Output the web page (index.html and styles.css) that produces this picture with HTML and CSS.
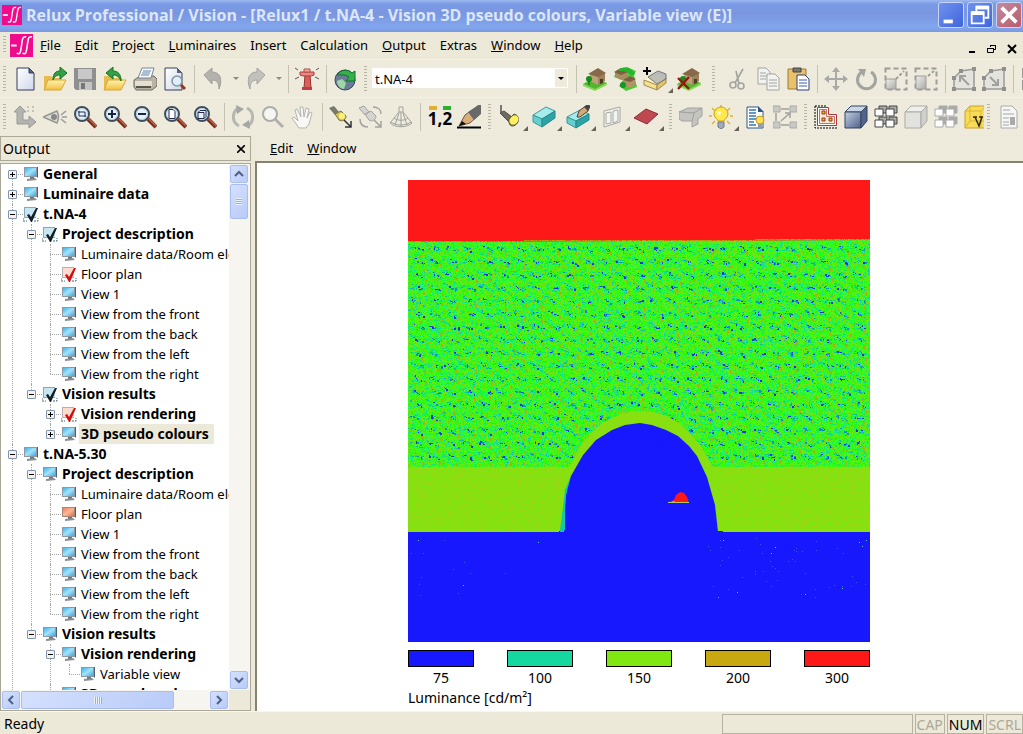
FILE: index.html
```
<!DOCTYPE html>
<html lang="en">
<head>
    <meta charset="UTF-8">
    <meta name="viewport" content="width=device-width, initial-scale=1.0">
    <title>Relux Professional / Vision</title>
    <link rel="stylesheet" href="styles.css">
</head>
<body>
    <!-- shared icons -->
    <svg class="sprite" aria-hidden="true">
        <defs>
            <linearGradient id="gScreen" x1="0" y1="0" x2="1" y2="1"><stop offset="0" stop-color="#3fb4e6"/><stop offset=".5" stop-color="#a5e2fa"/><stop offset="1" stop-color="#38a9e0"/></linearGradient>
            <linearGradient id="gOrange" x1="0" y1="0" x2="1" y2="1"><stop offset="0" stop-color="#f08058"/><stop offset=".5" stop-color="#fbb898"/><stop offset="1" stop-color="#ea6a3c"/></linearGradient>
            <linearGradient id="gPage" x1="0" y1="0" x2="1" y2="1"><stop offset="0" stop-color="#fff"/><stop offset="1" stop-color="#cfd8ea"/></linearGradient>
            <linearGradient id="gFolder" x1="0" y1="0" x2="0" y2="1"><stop offset="0" stop-color="#fff3b0"/><stop offset="1" stop-color="#f0c040"/></linearGradient>
            <linearGradient id="gCube" x1="0" y1="0" x2="1" y2="1"><stop offset="0" stop-color="#c4cfe4"/><stop offset="1" stop-color="#4d5f88"/></linearGradient>
            <linearGradient id="gGray" x1="0" y1="0" x2="1" y2="1"><stop offset="0" stop-color="#f0efea"/><stop offset="1" stop-color="#a9a9a6"/></linearGradient>
            <symbol id="monitor" viewBox="0 0 16 16">
                <path d="M1 1h13v10H1z" fill="#8d9aa5"/><path d="M2 2h11v8H2z" fill="url(#gScreen)"/><path d="M14 1h1v11l-1-1z" fill="#55606a"/><path d="M7 11h4v2H7z" fill="#6c757c"/><path d="M4 13l8-1 2 2-10 1z" fill="#8b8f92"/>
            </symbol>
            <symbol id="monitor-orange" viewBox="0 0 16 16">
                <path d="M1 1h13v10H1z" fill="#a88478"/><path d="M2 2h11v8H2z" fill="url(#gOrange)"/><path d="M14 1h1v11l-1-1z" fill="#6a5750"/><path d="M7 11h4v2H7z" fill="#6c757c"/><path d="M4 13l8-1 2 2-10 1z" fill="#8b8f92"/>
            </symbol>
            <symbol id="check-dark" viewBox="0 0 16 16">
                <path d="M1 1h12v11H1z" fill="#86a8b8"/><path d="M2 2h11v9H2z" fill="#c6e6f4"/><path d="M0 12v3h4M11 15h4v-3" fill="none" stroke="#3c6c80" stroke-dasharray="2 1"/><path d="M4 9l2-1 2 3 5-9h2L9 16H8z" fill="#141e26"/>
            </symbol>
            <symbol id="check-red" viewBox="0 0 16 16">
                <path d="M1 1h12v11H1z" fill="#b8aeb4"/><path d="M2 2h11v9H2z" fill="#fbdccf"/><path d="M0 12v3h4M11 15h4v-3" fill="none" stroke="#3c6c80" stroke-dasharray="2 1"/><path d="M4 9l2-1 2 3 5-9h2L9 16H8z" fill="#d01010"/>
            </symbol>
            <symbol id="logo" viewBox="0 0 24 24">
                <path d="M0 0h24v24H0z" fill="#f00a8c"/><path d="M1 12h6" stroke="#fff" stroke-width="2"/><path d="M7 20c4 2 4-1 5-8s1-10 5-9M13 20c4 2 4-1 5-8s1-10 5-9" fill="none" stroke="#fff" stroke-width="1.6"/>
            </symbol>
            <symbol id="lens" viewBox="0 0 24 24">
                <path d="M15 14l8 8" stroke="#7c2c1c" stroke-width="4"/><path d="M15 13l8 8" stroke="#c0664c" stroke-width="1.4"/><circle cx="9" cy="9" r="7" fill="#e6f2fa" stroke="#3e4e5c" stroke-width="2"/><circle cx="9" cy="9" r="5.5" fill="none" stroke="#b7cbd8"/>
            </symbol>
            <symbol id="house" viewBox="0 0 24 24">
                <path d="M0 17l11-6 13 5-12 7z" fill="#4fb82c"/><path d="M0 17l12 5v2L0 19zM24 16l-12 6v2l12-6z" fill="#8bd85c"/><path d="M7 7l8-5 7 4v8l-7 4-8-4z" fill="#9b8059"/><path d="M7 7l8 3v8l-8-4z" fill="#bca277"/><path d="M5 7l10-6 8 5-8 4z" fill="#85694a"/><path d="M17 12h3v4l-3 1z" fill="#4e3a26"/><circle cx="6" cy="12" r="3" fill="#168c20"/><path d="M6 14v4" stroke="#0b5a12"/>
            </symbol>
            <symbol id="blocks" viewBox="0 0 24 24">
                <g stroke="currentColor" fill="#fff"><path d="M5 1h8v7H5zM15 1h8v7h-8zM5 12h8v7H5zM15 12h8v7h-8z" fill="#aaa"/><path d="M1 4h8v7H1zM12 4h8v7h-8zM1 15h8v7H1zM12 15h8v7h-8z"/></g>
            </symbol>
        </defs>
    </svg>

    <header class="titlebar">
        <svg class="titlebar-logo"><use href="#logo"/></svg>
        <h1>Relux Professional / Vision - [Relux1 / t.NA-4 - Vision 3D pseudo colours, Variable view (E)]</h1>
        <div class="window-buttons">
            <button aria-label="Minimise"><svg viewBox="0 0 26 26"><path d="M5 18h10v4H5z" fill="#fff"/></svg></button>
            <button aria-label="Restore"><svg viewBox="0 0 26 26"><path d="M9 9V4h13v12h-4" fill="none" stroke="#fff" stroke-width="2"/><path d="M9 5h13" stroke="#fff" stroke-width="4"/><path d="M4 10h13v12H4z" fill="none" stroke="#fff" stroke-width="2"/><path d="M4 11h13" stroke="#fff" stroke-width="4"/></svg></button>
            <button class="close" aria-label="Close"><svg viewBox="0 0 26 26"><path d="M5 5l16 16M21 5L5 21" stroke="#fff" stroke-width="4"/></svg></button>
        </div>
    </header>

    <nav class="menubar">
        <span class="grip"></span>
        <svg class="menubar-logo"><use href="#logo"/></svg>
        <button><u>F</u>ile</button>
        <button><u>E</u>dit</button>
        <button><u>P</u>roject</button>
        <button><u>L</u>uminaires</button>
        <button>Insert</button>
        <button>Calculation</button>
        <button><u>O</u>utput</button>
        <button>Extras</button>
        <button><u>W</u>indow</button>
        <button><u>H</u>elp</button>
        <div class="mdi-buttons">
            <button aria-label="Minimise document"><svg viewBox="0 0 10 10"><path d="M2 7h6v2H2z"/></svg></button>
            <button aria-label="Restore document"><svg viewBox="0 0 10 10"><path d="M3.5 3V1.5h5v4H7M3 1.5h6M.5 4.5h6v4h-6zM0 4.5h7" fill="none" stroke="#000"/></svg></button>
            <button aria-label="Close document"><svg viewBox="0 0 10 10"><path d="M1 1l8 8M9 1L1 9" stroke="#000" stroke-width="2"/></svg></button>
        </div>
    </nav>

    <div class="toolbar">
        <span class="grip"></span>
        <button class="tool" aria-label="New"><svg viewBox="0 0 24 24"><path d="M4 1h12l5 5v17H4z" fill="url(#gPage)" stroke="#333f58"/><path d="M16 1v5h5z" fill="#56648a" stroke="#333f58"/></svg></button>
        <button class="tool" aria-label="Open"><svg viewBox="0 0 24 24"><path d="M1 22V9h7l2 2h9v11z" fill="#e8bd50"/><path d="M1 23l4-10h18l-5 10z" fill="url(#gFolder)" stroke="#d9a53a"/><path d="M10 13c0-7 3-9 7-9V0l7 6-7 6V8c-3 0-5 1-7 5z" fill="#33a044" stroke="#187028"/></svg></button>
        <button class="tool" aria-label="Save"><svg viewBox="0 0 24 24"><path d="M1 1h22v22H3l-2-2z" fill="#8f8f8f"/><path d="M5 2h14v10H5z" fill="#c8c8c8"/><path d="M6 15h13v8H6z" fill="#c4c4c4"/><path d="M8 16h4v6H8z" fill="#777"/></svg></button>
        <button class="tool" aria-label="Import"><svg viewBox="0 0 24 24"><path d="M1 22V9h7l2 2h9v11z" fill="#e8bd50"/><path d="M1 23l4-10h18l-5 10z" fill="url(#gFolder)" stroke="#d9a53a"/><path d="M18 14c0-7-3-10-8-10V0L3 6l7 6V8c4 0 6 2 8 6z" fill="#33a044" stroke="#187028"/></svg></button>
        <button class="tool" aria-label="Print"><svg viewBox="0 0 24 24"><path d="M1 13l6-4h14l3 3v7l-5 4H3l-2-3z" fill="#b9b3a4" stroke="#6f6a5e"/><path d="M9 1h12l-3 10H5z" fill="#f5f9ff" stroke="#7b8596"/><path d="M10 4h8M9 6h8M8 8h8" stroke="#5d84a5"/><path d="M2 14h17v5H2z" fill="#e4dfd0"/><path d="M3 20h15" stroke="#555" stroke-width="2"/></svg></button>
        <button class="tool" aria-label="Preview"><svg viewBox="0 0 24 24"><path d="M2 1h12l5 5v17H2z" fill="url(#gPage)" stroke="#333f58"/><path d="M14 1v5h5z" fill="#56648a"/><path d="M18 18l4 4" stroke="#8c3a26" stroke-width="3"/><circle cx="14" cy="14" r="5" fill="#dceffa" stroke="#8494a2" stroke-width="1.5"/></svg></button>
        <span class="sep"></span>
        <button class="tool" aria-label="Undo"><svg viewBox="0 0 24 24"><path d="M3 8l8-7v4c8 0 11 7 7 17 0-6-2-9-7-9v4z" fill="#b4b2ad" stroke="#a09e9a"/></svg></button>
        <button class="drop" aria-label="Undo list"></button>
        <button class="tool" aria-label="Redo"><svg viewBox="0 0 24 24"><path d="M21 8l-8-7v4C5 5 2 12 6 22c0-6 2-9 7-9v4z" fill="#c3c1bc" stroke="#a5a39f"/></svg></button>
        <button class="drop" aria-label="Redo list"></button>
        <span class="sep"></span>
        <button class="tool" aria-label="Calculate"><svg viewBox="0 0 24 24"><path d="M10 8h5l1 13H9z" fill="#d86058" stroke="#973030"/><path d="M7 20h10v3H7z" fill="#b84040"/><path d="M5 5h14v3l-3 1H8L5 8z" fill="#ec8880" stroke="#a53c3c"/><path d="M9 2h6v3H9z" fill="#f4a89c" stroke="#b05048"/><path d="M0 1l3 2M24 1l-3 2M0 12l4-2M24 12l-4-2" stroke="#555"/></svg></button>
        <span class="sep"></span>
        <button class="tool" aria-label="Web"><svg viewBox="0 0 24 24"><circle cx="12" cy="13" r="10" fill="#6a7c98" stroke="#34465f"/><path d="M4 8c4-6 11-6 15-2l3-2v10h-9l3-4c-4-3-9-2-12-2z" fill="#35b04a" stroke="#12722a"/><path d="M4 14l5-2 4 4-2 6c-4 0-7-4-7-8z" fill="#9fd8a6"/></svg></button>
        <span class="grip"></span>
        <label class="combo">
            <select aria-label="Scene"><option>t.NA-4</option></select>
        </label>
        <span class="sep"></span>
        <button class="tool" aria-label="Exterior scene"><svg><use href="#house"/></svg></button>
        <button class="tool" aria-label="Several scenes"><svg viewBox="0 0 24 24"><path d="M4 3l10-3 9 4-2 4 3 12-11 4-7-5 4-6-9-3z" fill="#51c834"/><path d="M2 5l6-3 6 3v6l-6 2-6-3z" fill="#a88c62"/><path d="M11 13l6-4 5 3v6l-5 3-6-3z" fill="#b09468"/><path d="M1 5l7-4 7 4-7 3zM10 13l7-4 6 3-6 3z" fill="#7a5f42"/><path d="M6 2c5-3 13-2 16 5l-4 2c-2-4-6-5-12-5z" fill="#21b82c"/><circle cx="10" cy="18" r="3" fill="#199428"/></svg></button>
        <button class="tool has-menu" aria-label="Add room"><svg viewBox="0 0 24 24"><path d="M1 13l9-5 13 3-9 7z" fill="#fff6c4"/><path d="M1 13l13 5v5L1 18z" fill="#f6e08c" stroke="#9c8a5a"/><path d="M14 18l9-7v5l-9 7z" fill="#e4c464" stroke="#9c8a5a"/><path d="M5 10l10-6 8 3v5l-9 5z" fill="#a3a7ae" fill-opacity=".7" stroke="#777"/><path d="M0 4h8M4 0v8" stroke="#000" stroke-width="2"/></svg></button>
        <button class="tool" aria-label="Delete scene"><svg viewBox="0 0 24 24"><use href="#house"/><path d="M1 11l11 11M12 10L1 22" stroke="#a01010" stroke-width="2.4"/></svg></button>
        <span class="grip spaced"></span>
        <button class="tool" aria-label="Cut"><svg viewBox="0 0 24 24" fill="none" stroke="#a3a3a0" stroke-width="1.6"><path d="M17 2L9 16M10 4l3 13"/><circle cx="7" cy="18" r="3"/><circle cx="15" cy="19" r="3"/></svg></button>
        <button class="tool" aria-label="Copy"><svg viewBox="0 0 24 24" fill="#f3f3f1" stroke="#a3a3a0"><path d="M2 1h8l4 4v12H2z"/><path d="M4 6h6M4 9h8M4 12h6"/><path d="M11 7h8l4 4v12H11z"/><path d="M13 13h8M13 16h8M13 19h8"/></svg></button>
        <button class="tool" aria-label="Paste"><svg viewBox="0 0 24 24"><path d="M2 2h18v20H2z" fill="#e9c168" stroke="#9c7a38"/><path d="M7 1h8v4H7z" fill="#777" stroke="#444"/><path d="M11 8h8l4 4v11H11z" fill="#fff" stroke="#2e4372"/><path d="M13 13h8M13 16h8M13 19h8" stroke="#3a5fa4"/></svg></button>
        <span class="sep"></span>
        <button class="tool" aria-label="Move"><svg viewBox="0 0 24 24"><path d="M11 5v6H5V8l-5 4 5 4v-3h6v6H8l4 5 4-5h-3v-6h6v3l5-4-5-4v3h-6V5h3l-4-5-4 5z" fill="#a9a9a6"/></svg></button>
        <button class="tool" aria-label="Rotate"><svg viewBox="0 0 24 24"><path d="M8 5a9 9 0 1 0 9 0" fill="none" stroke="#a3a3a0" stroke-width="3"/><path d="M4 2l8 0-2 8z" fill="#a3a3a0"/></svg></button>
        <button class="tool" aria-label="Scale"><svg viewBox="0 0 24 24"><path d="M1.500 1.500h21v21h-21z" fill="none" stroke="#9c9c99" stroke-width="2" stroke-dasharray="5 3"/><path d="M2 12h10v10H2z" fill="url(#gGray)" stroke="#9c9c99"/><path d="M12 12l8-8" stroke="#9c9c99" stroke-dasharray="3 2" stroke-width="2"/></svg></button>
        <button class="tool" aria-label="Resize"><svg viewBox="0 0 24 24"><path d="M1.500 1.500h21v21h-21z" fill="none" stroke="#9c9c99" stroke-width="2" stroke-dasharray="5 3"/><path d="M2 9h10v13H2z" fill="url(#gGray)" stroke="#9c9c99"/><path d="M14 9l6-5" stroke="#9c9c99" stroke-dasharray="3 2" stroke-width="2"/></svg></button>
        <span class="sep"></span>
        <button class="tool" aria-label="Insert point"><svg viewBox="0 0 24 24"><path d="M2 22V11l7-7 13-2v20z" fill="#e4e3dd" stroke="#9a9a97" stroke-width="1.500"/><path d="M0 20h4v4H0zM20 20h4v4h-4zM20 0h4v4h-4zM7 2h4v4H7zM0 9h4v4H0z" fill="#8f8f8c"/><path d="M9 10l8 8M8 15V9h6" fill="none" stroke="#a0a09d" stroke-width="2"/></svg></button>
        <button class="tool" aria-label="Remove point"><svg viewBox="0 0 24 24"><path d="M2 22V11l7-7 13-2v20z" fill="#e4e3dd" stroke="#9a9a97" stroke-width="1.500"/><path d="M0 20h4v4H0zM20 20h4v4h-4zM20 0h4v4h-4zM7 2h4v4H7zM0 9h4v4H0z" fill="#8f8f8c"/><path d="M8 10l8 8M10 18h6v-6" fill="none" stroke="#a0a09d" stroke-width="2"/></svg></button>
        <span class="sep"></span>
        <button class="tool" aria-label="Align"><svg viewBox="0 0 24 24"><path d="M3 2h18v8H3zM3 14h18v8H3z" fill="#ddd" stroke="#999" stroke-width="2"/></svg></button>
    </div>

    <div class="toolbar">
        <span class="grip"></span>
        <button class="tool" aria-label="Directions"><svg viewBox="0 0 24 24"><path d="M7 1l6 6h-3v8h6v-4l7 6-7 6v-4H4V7H1z" fill="#b3b3b0" stroke="#999"/><path d="M14 2h10M14 6h10" stroke="#999" stroke-dasharray="2 3"/></svg></button>
        <button class="tool" aria-label="View point"><svg viewBox="0 0 24 24"><path d="M0 12l14-6c2 4 2 8 0 12z" fill="#dcdcd8" stroke="#949491" stroke-width="1.5"/><circle cx="11" cy="12" r="3" fill="#888"/><path d="M23 6l-5 4M24 12h-5M23 18l-5-4" stroke="#999" stroke-width="1.5"/></svg></button>
        <button class="tool" aria-label="Zoom window"><svg viewBox="0 0 24 24"><use href="#lens"/><path d="M5 7h7v5M6 6v5h7" fill="none" stroke="#222a50"/></svg></button>
        <button class="tool" aria-label="Zoom in"><svg viewBox="0 0 24 24"><use href="#lens"/><path d="M5 9h8M9 5v8" stroke="#18244c" stroke-width="2"/></svg></button>
        <button class="tool" aria-label="Zoom out"><svg viewBox="0 0 24 24"><use href="#lens"/><path d="M5 9h8" stroke="#18244c" stroke-width="2"/></svg></button>
        <button class="tool" aria-label="Zoom page"><svg viewBox="0 0 24 24"><use href="#lens"/><path d="M6 4.500h4l2 2v7H6z" fill="#fff" stroke="#222a50"/></svg></button>
        <button class="tool" aria-label="Zoom object"><svg viewBox="0 0 24 24"><use href="#lens"/><path d="M5 7.500h6v6H5zM5 7.500l2-2h6v6l-2 2" fill="none" stroke="#222a50"/></svg></button>
        <span class="sep"></span>
        <button class="tool" aria-label="Orbit"><svg viewBox="0 0 24 24"><path d="M8 21C0 17 1 6 8 3M16 3c8 4 7 15 0 18" fill="none" stroke="#b6b6b2" stroke-width="3"/><path d="M5 0l8 4-7 5zM19 24l-8-4 7-5z" fill="#a6a6a2"/></svg></button>
        <button class="tool" aria-label="Zoom"><svg viewBox="0 0 24 24"><path d="M14 14l8 8" stroke="#b0b0ac" stroke-width="3"/><circle cx="9" cy="9" r="7" fill="#f5f5f2" stroke="#acaca8" stroke-width="2"/></svg></button>
        <button class="tool" aria-label="Pan"><svg viewBox="0 0 24 24"><path d="M8 23l-7-10 2-1 4 4L4 5l2-1 4 8-1-10h3l1 10 2-9 3 1-2 9 3-6 2 1-3 11-3 4z" fill="#f8f8f5" stroke="#b4b4b0"/></svg></button>
        <span class="sep"></span>
        <button class="tool" aria-label="Lamp direction"><svg viewBox="0 0 24 24"><path d="M0 3l5-2 5 6-4 3z" fill="#77786e"/><path d="M6 9l6-3 5 5c0 4-4 6-7 4z" fill="#d6c552" stroke="#77733c"/><circle cx="13" cy="11" r="3" fill="#fff27a"/><path d="M15 15l7 7M22 16v6h-6" fill="none" stroke="#333" stroke-width="1.5"/></svg></button>
        <button class="tool" aria-label="Lamp rotation"><svg viewBox="0 0 24 24" fill="#d4d4d0" stroke="#a2a29f"><path d="M0 3l5-2 5 6-4 3zM6 9l6-3 5 5c0 4-4 6-7 4z"/><path d="M14 2c5 0 8 3 8 7M1 14c0 5 3 8 8 8M15 15l7 7M22 16v6h-6" fill="none" stroke-width="1.5"/></svg></button>
        <button class="tool" aria-label="Photometric solid"><svg viewBox="0 0 24 24" fill="none" stroke="#a2a29f"><path d="M10 2h4v5h-4zM10 7L1 18c5 5 17 5 22 0L14 7M12 7v15M10 8L6 20M14 8l4 12M5 13c4 3 10 3 14 0M2 17c5 4 15 4 20 0"/></svg></button>
        <span class="sep"></span>
        <button class="tool numbers" aria-label="Values"><span class="numbers-marks"></span><b>1,2</b></button>
        <button class="tool" aria-label="Draw"><svg viewBox="0 0 24 24"><path d="M2 21L8 10l14-10h2v8L13 18z" fill="#d9ad7c" stroke="#6d5848"/><path d="M11 7L22 0h2v9l-7 6z" fill="#696969"/><path d="M2 21l3-5 4 3z" fill="#111"/><path d="M0 22.500h24" stroke="#000" stroke-width="2"/></svg></button>
        <span class="grip"></span>
        <button class="tool has-menu" aria-label="Luminaire"><svg viewBox="0 0 24 24"><path d="M3 0v7" fill="none" stroke="#777" stroke-width="2"/><path d="M2 8l4-2 8 6-3 5z" fill="#6c6c60" stroke="#4c4c44"/><path d="M10 15l6-6c4 1 5 4 4 8-2 4-6 5-8 3z" fill="#8e8a52" stroke="#5c5a38"/><ellipse cx="16" cy="15" rx="4" ry="5" transform="rotate(40 16 15)" fill="#fff060"/></svg></button>
        <button class="tool has-menu" aria-label="Block"><svg viewBox="0 0 24 24"><path d="M1 10L14 2l9 4-13 8z" fill="#a6ecec" stroke="#3f9898"/><path d="M1 10l9 4v8l-9-5z" fill="#62cfd0" stroke="#3f9898"/><path d="M10 14l13-8v7l-13 9z" fill="#2ba4a6" stroke="#2c8486"/></svg></button>
        <button class="tool has-menu" aria-label="Edit block"><svg viewBox="0 0 24 24"><path d="M1 12L14 5l9 4-13 7z" fill="#a6ecec" stroke="#3f9898"/><path d="M1 12l9 4v7l-9-5z" fill="#62cfd0" stroke="#3f9898"/><path d="M10 16l13-7v6l-13 8z" fill="#2ba4a6" stroke="#2c8486"/><path d="M11 12l2-6 8-6 3 1-2 5-8 6z" fill="#d6a777" stroke="#4e4035"/><path d="M18 2l3-2 3 1-2 5z" fill="#444"/></svg></button>
        <button class="tool has-menu" aria-label="Window element"><svg viewBox="0 0 24 24" fill="#f4f4f0" stroke="#a6a6a2"><path d="M4 6l16-4v15L4 22z"/><path d="M6 8l5-1v11l-5 1zM13 6l5-1v11l-5 2z"/></svg></button>
        <button class="tool has-menu" aria-label="Surface"><svg viewBox="0 0 24 24"><path d="M0 13L12 4l12 5-11 10z" fill="#c04850" stroke="#8c2c38"/></svg></button>
        <span class="grip"></span>
        <button class="tool" aria-label="Camera"><svg viewBox="0 0 24 24" fill="#c4c4c0" stroke="#a2a29f"><path d="M0 7l9-4h14l-8 5z"/><path d="M0 7l15 1v8H3l-3-2z"/><path d="M15 8l8-5v8l-4 3v5l-6 3v-5z"/></svg></button>
        <button class="tool has-menu" aria-label="Light"><svg viewBox="0 0 24 24"><path d="M12 0v3M3 3l3 3M21 3l-3 3M0 11h3M24 11h-3M3 19l3-3M21 19l-3-3" stroke="#e8b41c" stroke-width="1.500"/><path d="M9 16c0-2-4-3-4-7a7 7 0 0 1 14 0c0 4-4 5-4 7z" fill="#ffe94c" stroke="#c8a018"/><path d="M9 17h6v5l-3 2-3-2z" fill="#a3abb8" stroke="#727a88"/><circle cx="10" cy="8" r="2" fill="#fffbd0"/></svg></button>
        <button class="tool" aria-label="Light list"><svg viewBox="0 0 24 24"><path d="M4 2h11l5 5v16H4z" fill="#fff" stroke="#2b568c"/><path d="M6 5h7M6 8h7M6 11h7M6 14h7M6 17h5M6 20h7" stroke="#2f78b8" stroke-width="1.500"/><path d="M15 1l6 6h-6z" fill="#2b568c"/><circle cx="17" cy="15" r="4" fill="#ffdf54" stroke="#c69a20"/><path d="M15 19h4v4h-4z" fill="#999"/></svg></button>
        <button class="tool" aria-label="Groups"><svg viewBox="0 0 24 24"><path d="M0 1h7v6H0zM17 1h7v6h-7zM0 17h7v6H0zM17 17h7v6h-7z" fill="#c9c9c5" stroke="#a9a9a5"/><path d="M3 8v8M8 4h8M8 16l9-8M12 8h5v5M8 20h8" fill="none" stroke="#a0a09d" stroke-width="1.500"/></svg></button>
        <span class="grip"></span>
        <button class="tool" aria-label="Floor plan"><svg viewBox="0 0 24 24"><path d="M1 1h12M1 1v22h22" fill="none" stroke="#000" stroke-dasharray="2 1"/><path d="M3.500 2.500h11v7h8v11h-19z" fill="#fff" stroke="#b03838"/><path d="M5.500 4.500h7v7h8v7h-15z" fill="#fbe8d8" stroke="#c87060"/><path d="M8 6h3v3H8zM8 13h3v3H8zM15 13h3v3h-3z" fill="#f8b424" stroke="#8b3820"/></svg></button>
        <button class="tool" aria-label="3D view"><svg viewBox="0 0 24 24" stroke="#35435f"><path d="M1 7l6-6h16l-6 6z" fill="#cbd6e8"/><path d="M1 7h16v16H1z" fill="url(#gCube)"/><path d="M17 7l6-6v15l-6 7z" fill="#52648c"/></svg></button>
        <button class="tool dark" aria-label="3D arrangement"><svg><use href="#blocks"/></svg></button>
        <button class="tool" aria-label="3D view off"><svg viewBox="0 0 24 24" stroke="#aaaaa6"><path d="M1 7l6-6h16l-6 6z" fill="#efefeb"/><path d="M1 7h16v16H1z" fill="#e2e2de"/><path d="M17 7l6-6v15l-6 7z" fill="#cfcfcb"/></svg></button>
        <button class="tool pale" aria-label="3D arrangement off"><svg><use href="#blocks"/></svg></button>
        <button class="tool narrow" aria-label="Vision"><svg viewBox="0 0 24 24"><path d="M1 6l5-5h18v22H1z" fill="#f8dc58" stroke="#c9a220"/><path d="M1 6h16v17M17 6l5-5M6 1v15l-5 7M6 16h17" fill="none" stroke="#d9b534"/><path d="M9 12h4M15 12h4M11 12l4 9 3-9" fill="none" stroke="#2a2818" stroke-width="1.500"/></svg></button>
        <span class="grip"></span>
        <button class="tool" aria-label="Report"><svg viewBox="0 0 24 24"><path d="M4 1h11l5 5v17H4z" fill="#f7f7f5" stroke="#aaa"/><path d="M6 5h7M6 9h11M6 13h6M6 17h6M6 20h6" stroke="#a4a4a4"/><path d="M13 12h5v8h-5z" fill="#aaa"/></svg></button>
    </div>

    <main class="workspace">
        <aside class="output">
            <div class="output-head">
                <h2>Output</h2>
                <button aria-label="Close output"><svg viewBox="0 0 8 8"><path d="M0 0l8 8M8 0L0 8" stroke="#000" stroke-width="1.600"/></svg></button>
            </div>
            <div class="tree-frame">
                <div class="tree-view">
                    <ul class="tree">
                        <li><div class="node group"><button class="toggle plus" aria-label="Expand"></button><svg><use href="#monitor"/></svg><span>General</span></div></li>
                        <li><div class="node group"><button class="toggle plus" aria-label="Expand"></button><svg><use href="#monitor"/></svg><span>Luminaire data</span></div></li>
                        <li><div class="node group"><button class="toggle" aria-label="Collapse"></button><svg><use href="#check-dark"/></svg><span>t.NA-4</span></div>
                            <ul>
                                <li><div class="node group"><button class="toggle" aria-label="Collapse"></button><svg><use href="#check-dark"/></svg><span>Project description</span></div>
                                    <ul>
                                        <li><div class="node"><svg><use href="#monitor"/></svg><span>Luminaire data/Room elements</span></div></li>
                                        <li><div class="node"><svg><use href="#check-red"/></svg><span>Floor plan</span></div></li>
                                        <li><div class="node"><svg><use href="#monitor"/></svg><span>View 1</span></div></li>
                                        <li><div class="node"><svg><use href="#monitor"/></svg><span>View from the front</span></div></li>
                                        <li><div class="node"><svg><use href="#monitor"/></svg><span>View from the back</span></div></li>
                                        <li><div class="node"><svg><use href="#monitor"/></svg><span>View from the left</span></div></li>
                                        <li><div class="node"><svg><use href="#monitor"/></svg><span>View from the right</span></div></li>
                                    </ul>
                                </li>
                                <li><div class="node group"><button class="toggle" aria-label="Collapse"></button><svg><use href="#check-dark"/></svg><span>Vision results</span></div>
                                    <ul>
                                        <li><div class="node group"><button class="toggle plus" aria-label="Expand"></button><svg><use href="#check-red"/></svg><span>Vision rendering</span></div></li>
                                        <li><div class="node group selected"><button class="toggle plus" aria-label="Expand"></button><svg><use href="#monitor"/></svg><span>3D pseudo colours</span></div></li>
                                    </ul>
                                </li>
                            </ul>
                        </li>
                        <li><div class="node group"><button class="toggle" aria-label="Collapse"></button><svg><use href="#monitor"/></svg><span>t.NA-5.30</span></div>
                            <ul>
                                <li><div class="node group"><button class="toggle" aria-label="Collapse"></button><svg><use href="#monitor"/></svg><span>Project description</span></div>
                                    <ul>
                                        <li><div class="node"><svg><use href="#monitor"/></svg><span>Luminaire data/Room elements</span></div></li>
                                        <li><div class="node"><svg><use href="#monitor-orange"/></svg><span>Floor plan</span></div></li>
                                        <li><div class="node"><svg><use href="#monitor"/></svg><span>View 1</span></div></li>
                                        <li><div class="node"><svg><use href="#monitor"/></svg><span>View from the front</span></div></li>
                                        <li><div class="node"><svg><use href="#monitor"/></svg><span>View from the back</span></div></li>
                                        <li><div class="node"><svg><use href="#monitor"/></svg><span>View from the left</span></div></li>
                                        <li><div class="node"><svg><use href="#monitor"/></svg><span>View from the right</span></div></li>
                                    </ul>
                                </li>
                                <li><div class="node group"><button class="toggle" aria-label="Collapse"></button><svg><use href="#monitor"/></svg><span>Vision results</span></div>
                                    <ul>
                                        <li><div class="node group"><button class="toggle" aria-label="Collapse"></button><svg><use href="#monitor"/></svg><span>Vision rendering</span></div>
                                            <ul>
                                                <li><div class="node"><svg><use href="#monitor"/></svg><span>Variable view</span></div></li>
                                            </ul>
                                        </li>
                                        <li><div class="node group"><svg><use href="#monitor"/></svg><span>3D pseudo colours</span></div></li>
                                    </ul>
                                </li>
                            </ul>
                        </li>
                    </ul>
                </div>
                <div class="scroll vertical">
                    <button aria-label="Scroll up"><svg viewBox="0 0 10 10"><path d="M1 7l4-4 4 4"/></svg></button>
                    <div class="thumb"></div>
                    <button class="end" aria-label="Scroll down"><svg viewBox="0 0 10 10"><path d="M1 3l4 4 4-4"/></svg></button>
                </div>
                <div class="scroll horizontal">
                    <button aria-label="Scroll left"><svg viewBox="0 0 10 10"><path d="M7 1L3 5l4 4"/></svg></button>
                    <div class="thumb"></div>
                    <button class="end" aria-label="Scroll right"><svg viewBox="0 0 10 10"><path d="M3 1l4 4-4 4"/></svg></button>
                </div>
            </div>
        </aside>

        <section class="document">
            <nav class="document-menu">
                <button><u>E</u>dit</button>
                <button><u>W</u>indow</button>
            </nav>
            <div class="view">
                <figure class="result">
                    <canvas id="render" width="462" height="462"></canvas>
                    <ul class="legend">
                        <li><i class="swatch blue"></i>75</li>
                        <li><i class="swatch teal"></i>100</li>
                        <li><i class="swatch green"></i>150</li>
                        <li><i class="swatch ochre"></i>200</li>
                        <li><i class="swatch red"></i>300</li>
                    </ul>
                    <figcaption>Luminance [cd/m²]</figcaption>
                </figure>
            </div>
        </section>
    </main>

    <footer class="statusbar">
        <span class="status-text">Ready</span>
        <span class="cell wide"></span>
        <span class="cell off">CAP</span>
        <span class="cell">NUM</span>
        <span class="cell off">SCRL</span>
    </footer>

    <script src="script.js"></script>
</body>
</html>
```
FILE: styles.css
```
* {
    box-sizing: border-box;
}
body {
    margin: 0;
    height: 100vh;
    display: flex;
    flex-direction: column;
    overflow: hidden;
    background: #ece9d8;
    color: #000;
    font: 14px/20px "Noto Sans", "Open Sans", sans-serif;
}
button {
    padding: 0;
    border: none;
    background: none;
    color: inherit;
    font: inherit;
}
ul {
    margin: 0;
    padding: 0;
    list-style: none;
}
h1, h2, figure {
    margin: 0;
}
.sprite {
    position: absolute;
    width: 0;
    height: 0;
}

/* title bar */
.titlebar {
    flex: none;
    display: flex;
    align-items: center;
    height: 32px;
    padding: 0 1px 2px 2px;
    background: linear-gradient(#9db9ee 0, #7b9ae6 4px, #7a96df 14px, #82a6ee 27px, #7a98e0 32px);
    color: #dbe6fa;
}
.titlebar-logo {
    width: 20px;
    height: 20px;
    margin-right: 4px;
}
.titlebar h1 {
    flex: 1;
    min-width: 0;
    overflow: hidden;
    white-space: nowrap;
    font: bold 16px/20px "Open Sans", sans-serif;
}
.window-buttons {
    display: flex;
    gap: 3px;
}
.window-buttons button {
    width: 26px;
    height: 26px;
    border: 1px solid #c6d5f8;
    border-radius: 3px;
    background: linear-gradient(135deg, #6f92ee, #3f66dc);
}
.window-buttons .close {
    background: linear-gradient(135deg, #c48aa0, #b85c6c);
}
.window-buttons svg {
    display: block;
    width: 24px;
    height: 24px;
}

/* menu and toolbars */
.menubar {
    flex: none;
    display: flex;
    align-items: center;
    height: 27px;
    padding: 0 6px 1px 0;
    font-size: 13px;
}
.menubar > button {
    margin: 0 7px;
}
.menubar-logo {
    width: 23px;
    height: 23px;
}
.mdi-buttons {
    display: flex;
    gap: 10px;
    margin-left: auto;
    padding-top: 7px;
}
.mdi-buttons svg {
    display: block;
    width: 10px;
    height: 10px;
}
.toolbar {
    flex: none;
    display: flex;
    align-items: center;
    height: 38px;
    overflow: hidden;
    border-top: 1px solid #f4f2e8;
    background: #eeebdd;
}
.grip {
    flex: none;
    width: 11px;
    height: 26px;
    background: repeating-linear-gradient(#b8b5a5 0 1px, transparent 1px 3px) 3px 0 / 3px 100% no-repeat;
}
.menubar .grip {
    width: 10px;
    height: 18px;
}
.grip.spaced {
    margin: 0 4px;
}
.sep {
    flex: none;
    width: 8px;
    height: 28px;
    background: linear-gradient(#c5c2b2, #c5c2b2) 3px 0 / 1px 100% no-repeat;
}
.tool {
    flex: none;
    position: relative;
    width: 30px;
    height: 30px;
}
.tool svg {
    display: block;
    width: 24px;
    height: 24px;
    margin: 0 2px;
}
.tool.has-menu {
    width: 34px;
}
.tool.has-menu::after {
    content: "";
    position: absolute;
    right: 2px;
    bottom: 1px;
    border-bottom: 5px solid #666458;
    border-left: 5px solid transparent;
}
.tool.narrow {
    width: 22px;
    overflow: hidden;
}
.tool.dark {
    color: #444;
}
.tool.pale {
    color: #aaa;
}
.numbers {
    display: flex;
    flex-direction: column;
    align-items: center;
    justify-content: center;
}
.numbers-marks {
    width: 22px;
    height: 4px;
    background: linear-gradient(90deg, #e0b030 8px, transparent 8px 14px, #2fb030 14px);
}
.numbers b {
    font: bold 17px/18px "Open Sans", sans-serif;
}
.drop {
    flex: none;
    width: 13px;
    height: 30px;
}
.drop::before {
    content: "";
    display: block;
    margin: 0 auto;
    width: 0;
    border-top: 3px solid #8c8a80;
    border-left: 3px solid transparent;
    border-right: 3px solid transparent;
}
.combo {
    flex: none;
    width: 196px;
    height: 22px;
    margin-right: 5px;
    position: relative;
}
.combo select {
    display: block;
    width: 100%;
    height: 20px;
    padding: 0 2px;
    border: 1px solid #fff;
    appearance: none;
    background: linear-gradient(#eeebdd, #eeebdd) right / 12px 100% no-repeat #fff;
    color: #000;
    font: inherit;
    font-size: 13px;
}
.combo::after {
    content: "";
    position: absolute;
    right: 4px;
    top: 9px;
    border-top: 3px solid #000;
    border-left: 3px solid transparent;
    border-right: 3px solid transparent;
}

/* output pane */
.workspace {
    flex: 1;
    min-height: 0;
    display: flex;
    gap: 4px;
    padding-top: 1px;
}
.output {
    flex: none;
    width: 251px;
    display: flex;
    flex-direction: column;
}
.output-head {
    flex: none;
    display: flex;
    align-items: center;
    justify-content: space-between;
    height: 25px;
    margin-bottom: 2px;
    padding: 0 5px 0 2px;
    border: 1px solid #aca899;
}
.output-head h2 {
    font: inherit;
}
.output-head svg {
    display: block;
    width: 8px;
    height: 8px;
}
.tree-frame {
    flex: 1;
    min-height: 0;
    display: grid;
    grid-template-columns: 1fr 21px;
    grid-template-rows: 1fr 20px;
    border: 1px solid #aca899;
}
.tree-view {
    overflow: hidden;
    background: #fff;
    font-size: 13px;
}
.tree {
    width: 400px;
    padding-left: 2px;
}
.tree ul {
    padding-left: 19px;
}
.tree li {
    position: relative;
}
/* dotted guide lines */
.tree li::before {
    content: "";
    position: absolute;
    left: 9px;
    top: 0;
    bottom: 0;
    border-left: 1px dotted #a5a5a5;
}
.tree > li:first-child::before {
    top: 10px;
}
.tree ul li:last-child::before {
    bottom: auto;
    height: 10px;
}
.node {
    position: relative;
    display: flex;
    align-items: center;
    height: 20px;
    padding-left: 20px;
    white-space: nowrap;
}
.node::before {
    content: "";
    position: absolute;
    left: 9px;
    width: 11px;
    border-top: 1px dotted #a5a5a5;
}
.node svg {
    flex: none;
    width: 16px;
    height: 16px;
    margin-right: 2px;
}
.node span {
    padding: 0 5px 0 2px;
}
.group {
    font-size: 14px;
    font-weight: bold;
}
.selected span {
    background: #ece9d8;
}
.toggle {
    position: absolute;
    left: 5px;
    width: 9px;
    height: 9px;
    border: 1px solid #8496ae;
    border-radius: 1px;
    background: linear-gradient(#000, #000) center / 5px 1px no-repeat #f4f2ea;
}
.toggle.plus {
    background: linear-gradient(#000, #000) center / 5px 1px no-repeat, linear-gradient(#000, #000) center / 1px 5px no-repeat #f4f2ea;
}
.scroll {
    display: flex;
    gap: 1px;
    padding: 1px;
    background: #f6f5f0;
}
.scroll.vertical {
    flex-direction: column;
}
.scroll button,
.thumb {
    flex: none;
    width: 18px;
    height: 18px;
    border: 1px solid #a9bdf0;
    border-radius: 2px;
    background: linear-gradient(135deg, #d5e0fd, #b8cbf8);
}
.scroll .end {
    margin-top: auto;
}
.horizontal .end {
    margin-top: 0;
    margin-left: auto;
}
.scroll svg {
    display: block;
    width: 10px;
    height: 10px;
    margin: 3px;
    fill: none;
    stroke: #4d6185;
    stroke-width: 2;
}
.thumb {
    display: flex;
    align-items: center;
    justify-content: center;
}
.thumb::before {
    content: "";
    width: 6px;
    height: 7px;
    background: repeating-linear-gradient(#eef4fe 0 1px, #8cb0f8 1px 2px);
}
.vertical .thumb {
    height: 35px;
}
.horizontal .thumb {
    width: 153px;
}
.horizontal .thumb::before {
    width: 8px;
    background: repeating-linear-gradient(90deg, #eef4fe 0 1px, #8cb0f8 1px 2px);
}

/* document */
.document {
    flex: 1;
    min-width: 0;
    display: flex;
    flex-direction: column;
}
.document-menu {
    flex: none;
    display: flex;
    gap: 14px;
    height: 25px;
    padding: 2px 15px 3px;
    background: #eeebdd;
    font-size: 13px;
}
.view {
    flex: 1;
    min-height: 0;
    display: flex;
    justify-content: center;
    padding: 17px 2px 0 0;
    border-top: 2px solid #85836f;
    border-left: 2px solid #85836f;
    background: #fff;
}
.result {
    width: 462px;
}
.result canvas {
    display: block;
}
.legend {
    display: flex;
    justify-content: space-between;
    padding-top: 8px;
    text-align: center;
}
.swatch {
    display: block;
    width: 66px;
    height: 17px;
    margin-bottom: 1px;
    border: 1px solid #000;
}
.blue {
    background: #1818ff;
}
.teal {
    background: #14d8a0;
}
.green {
    background: #7ee810;
}
.ochre {
    background: #c8a810;
}
.red {
    background: #ff1818;
}

/* status bar */
.statusbar {
    flex: none;
    display: flex;
    gap: 2px;
    height: 23px;
    padding-top: 2px;
    border-top: 1px solid #f8f7f0;
}
.status-text {
    flex: 1;
    padding-left: 4px;
}
.cell {
    height: 20px;
    padding: 0 1px;
    border: 1px solid #b5b2a2;
}
.cell.wide {
    width: 191px;
}
.cell.off {
    color: #aca899;
}
```
FILE: script.js
```
const canvas = document.getElementById("render");
const ctx = canvas.getContext("2d");

// fixed seed so the grain is the same on every load
let seed = 7;
function rnd() {
    seed = (seed * 16807) % 2147483647;
    return seed / 2147483647;
}

function dot(x, y, color, w = 1, h = 1) {
    ctx.fillStyle = color;
    ctx.fillRect(Math.round(x), Math.round(y), w, h);
}

function polygon(points, color) {
    ctx.fillStyle = color;
    ctx.beginPath();
    points.forEach(([x, y]) => ctx.lineTo(x, y));
    ctx.fill();
}

// stone wall
const greens = ["#24ff14", "#2cfa18", "#3cfc10", "#4cf412", "#18f440", "#5cf010", "#6ee810", "#14e868", "#7ce014", "#40f01c"];
for (let y = 60; y < 288; y++) {
    for (let x = 0; x < 462; x++) {
        dot(x, y, greens[Math.floor(rnd() * greens.length)]);
    }
}
for (let i = 0; i < 5200; i++) {
    dot(rnd() * 462, 62 + rnd() * 225, rnd() < 0.65 ? "#14dc80" : "#88d418", 1 + Math.floor(rnd() * 2), 1);
}
for (let y = 66; y < 284; y += 13) {
    for (let x = 2; x < 462; x += 17) {
        for (let i = 0; i < 16; i++) {
            const dx = rnd() * 15 - 2;
            dot(x + dx, y + dx * 0.4 + rnd() * 6 - 3, rnd() < 0.35 ? "#12b8a8" : "#14dc88", 1 + Math.floor(rnd() * 2), 1);
        }
        const shift = rnd() * 5;
        for (let i = 0; i < 5; i++) {
            const dx = rnd() * 10;
            dot(x + shift + dx, y + dx * 0.4 + rnd() * 3 - 1, rnd() < 0.5 ? "#1438d8" : "#1090c8", 1 + Math.floor(rnd() * 2), 1 + Math.floor(rnd() * 1.4));
        }
        if (rnd() < 0.6) dot(x + 10 + rnd() * 5, y + 5 + rnd() * 5, "#a8b018", 2, 3);
    }
}

// ceiling
polygon([[0, 0], [462, 0], [462, 60], [0, 62]], "#ff1818");
for (let x = 0; x < 462; x++) {
    dot(x, 61 - x / 231, rnd() < 0.6 ? "#b09c14" : "#d06014");
}

// lower band and rim of the arch
ctx.fillStyle = "#88e010";
ctx.fillRect(0, 287, 462, 65);
polygon([[154, 300], [164, 282], [172, 267], [182, 254], [194, 243], [208, 236], [221, 232], [232, 231],
    [246, 232], [259, 236], [272, 244], [284, 255], [294, 268], [302, 281], [308, 300]], "#88e010");
for (let i = 0; i < 4200; i++) {
    dot(rnd() * 462, 288 + rnd() * 62, rnd() < 0.5 ? "#94da14" : "#7ce810", 1, 2);
}
for (let i = 0; i < 700; i++) {
    dot(rnd() * 462, 288 + rnd() * 62, "#a6cc14");
}

// floor and opening
ctx.fillStyle = "#1818ff";
ctx.fillRect(0, 352, 462, 110);
dot(151, 351, "#1818ff", 164, 1);
polygon([[157, 310], [163, 296], [161, 330], [158, 352], [152, 352]], "#10c8a0");
polygon([[156, 352], [157, 330], [158, 315], [163, 296], [175, 275], [188, 260], [204, 250], [217, 245], [232, 243],
    [244, 245], [258, 250], [270, 256], [281, 266], [289, 276], [299, 297], [307, 325], [310, 352]], "#1818ff");
polygon([[159, 306], [157, 325], [157, 350], [152, 351]], "#14c8a8");

for (let i = 0; i < 70; i++) {
    const side = rnd() < 0.75;
    dot(side ? 300 + rnd() * 160 : rnd() * 130, 358 + rnd() * 60, rnd() < 0.8 ? "#3858f4" : "#5cc0b0");
}

// lamp reflection
polygon([[259, 323], [266, 320], [268, 315], [272, 312], [276, 313], [279, 317], [281, 323]], "#ff1818");
dot(260, 322, "#b0c860", 21, 1);
dot(264, 321, "#a89838", 3, 1);
```
